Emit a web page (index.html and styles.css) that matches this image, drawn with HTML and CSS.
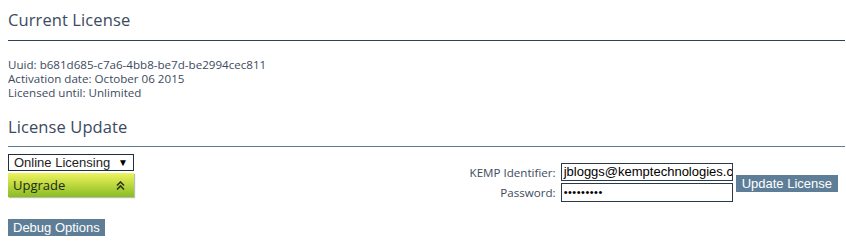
FILE: index.html
```html
<!DOCTYPE html>
<html>
<head>
<meta charset="utf-8">
<link rel="stylesheet" href="styles.css">
</head>
<body>
<div class="page">
  <h2 class="title title-current">Current License</h2>
  <div class="info">
    <div>Uuid: b681d685-c7a6-4bb8-be7d-be2994cec811</div>
    <div>Activation date: October 06 2015</div>
    <div>Licensed until: Unlimited</div>
  </div>
  <h2 class="title title-update">License Update</h2>
  <div class="update-row">
    <div class="left-col">
      <div class="select">
        <span>Online Licensing</span>
        <span class="arrow">&#9660;</span>
      </div>
      <div class="upgrade">
        <span>Upgrade</span>
        <svg class="chev" width="9" height="9" viewBox="0 0 9 9">
          <path d="M1 4.5 L4.5 1 L8 4.5 M1 8.5 L4.5 5 L8 8.5" fill="none" stroke="#2a3a1a" stroke-width="1.6"/>
        </svg>
      </div>
    </div>
    <div class="right-col">
      <div class="fields">
        <label class="lbl">KEMP Identifier:</label>
        <div class="input">jbloggs@kemptechnologies.com</div>
        <label class="lbl">Password:</label>
        <div class="input pw">&#8226;&#8226;&#8226;&#8226;&#8226;&#8226;&#8226;&#8226;&#8226;</div>
      </div>
      <div class="btn btn-update">Update License</div>
    </div>
  </div>
  <div class="btn btn-debug">Debug Options</div>
</div>
</body>
</html>
```

FILE: styles.css
```css
html, body {
  margin: 0;
  padding: 0;
  background: #ffffff;
}
.page {
  padding: 0 1px 0 8px;
  font-family: "Open Sans", "DejaVu Sans", sans-serif;
  color: #3b4a5c;
}
.title {
  margin: 0;
  font-weight: normal;
  font-size: 16.5px;
  letter-spacing: 0.1px;
  color: #3b4a60;
  line-height: 20px;
}
.title-current {
  padding-top: 10px;
  height: 30px;
  border-bottom: 1px solid #2e4255;
}
.info {
  padding-top: 17px;
  font-size: 11.6px;
  line-height: 14px;
  color: #3d4b5e;
}
.title-update {
  padding-top: 17px;
  height: 29px;
  border-bottom: 1px solid #5d7b95;
}
.update-row {
  display: flex;
  justify-content: space-between;
  align-items: flex-start;
  padding-top: 7px;
  padding-right: 7px;
}
.left-col {
  display: flex;
  flex-direction: column;
  gap: 2px;
  width: 126px;
}
.select {
  height: 15px;
  border: 1px solid #1f2f3f;
  display: flex;
  align-items: center;
  justify-content: space-between;
  padding: 0 5px 0 5px;
  font-family: "Liberation Sans", Arial, sans-serif;
  font-size: 13px;
  color: #222;
}
.arrow {
  font-size: 10px;
  color: #000;
}
.upgrade {
  height: 24px;
  background: linear-gradient(#eef35e, #c6de44 40%, #8abb24);
  box-shadow: 1px 1px 1px #b8c0b0;
  display: flex;
  align-items: center;
  justify-content: space-between;
  padding: 0 9px 0 5px;
  font-size: 13px;
  color: #1e2a1a;
}
.chev {
  display: block;
}
.right-col {
  display: flex;
  align-items: flex-start;
  gap: 3px;
  padding-top: 9px;
}
.fields {
  display: grid;
  grid-template-columns: auto 172px;
  column-gap: 5px;
  row-gap: 2px;
  align-items: center;
}
.lbl {
  text-align: right;
  font-size: 11.6px;
  color: #3d4b5e;
}
.input {
  height: 16px;
  border: 1px solid #2a3a4a;
  font-family: "Liberation Sans", Arial, sans-serif;
  font-size: 13px;
  color: #000;
  line-height: 16px;
  padding-left: 2px;
  overflow: hidden;
  white-space: nowrap;
}
.input.pw {
  height: 17px;
  line-height: 17px;
  font-size: 11px;
  letter-spacing: 0.5px;
}
.btn {
  background: #5e7e97;
  color: #ffffff;
  font-family: "Liberation Sans", Arial, sans-serif;
  font-size: 13px;
  line-height: 17px;
  height: 17px;
  padding: 0 6px;
  white-space: nowrap;
}
.btn-update {
  margin-top: 12px;
}
.btn-debug {
  display: inline-block;
  margin-top: 17px;
  padding: 0 5px;
}
```
